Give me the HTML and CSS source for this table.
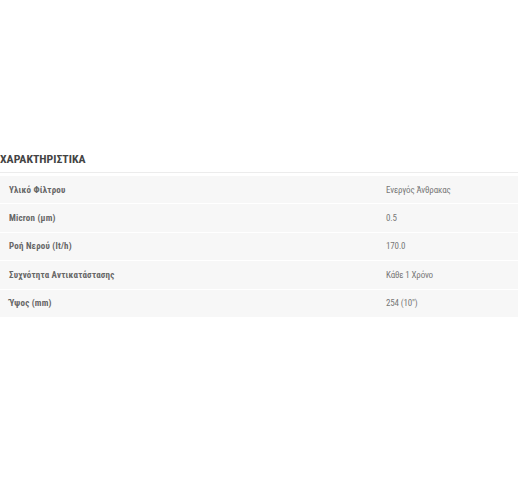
FILE: index.html
```html
<!DOCTYPE html>
<html lang="el">
<head>
<meta charset="utf-8">
<link rel="stylesheet" href="styles.css">
</head>
<body>
<section class="specs">
  <h2 class="specs-title">ΧΑΡΑΚΤΗΡΙΣΤΙΚΑ</h2>
  <table class="specs-table">
    <tr><th>Υλικό Φίλτρου</th><td>Ενεργός Άνθρακας</td></tr>
    <tr><th>Micron (μm)</th><td>0.5</td></tr>
    <tr><th>Ροή Νερού (lt/h)</th><td>170.0</td></tr>
    <tr><th>Συχνότητα Αντικατάστασης</th><td>Κάθε 1 Χρόνο</td></tr>
    <tr><th>Ύψος (mm)</th><td>254 (10")</td></tr>
  </table>
</section>
</body>
</html>
```
FILE: styles.css
```css
html, body { margin: 0; padding: 0; background: #fff; }
body { width: 518px; height: 478px; overflow: hidden; }
.specs { padding-top: 151px; }
.specs-title {
  margin: 0;
  padding: 0 0 5px 0;
  font-family: "Roboto Condensed", "DejaVu Sans Condensed", Roboto, sans-serif;
  font-weight: 700;
  font-size: 11.8px;
  line-height: 16px;
  color: #444;
  border-bottom: 1px solid #ececec;
}
.specs-table {
  width: 518px;
  margin-top: 3px;
  border-collapse: collapse;
  background: #f7f7f7;
  font-family: "Roboto Condensed", "DejaVu Sans Condensed", Roboto, sans-serif;
  font-size: 9px;
}
.specs-table tr { border-bottom: 1px solid #fff; }
.specs-table th, .specs-table td {
  height: 27.4px;
  padding: 0;
  text-align: left;
  vertical-align: middle;
}
.specs-table th {
  width: 377px;
  padding-left: 9px;
  font-weight: 700;
  letter-spacing: 0.2px;
  color: #666;
}
.specs-table td {
  color: #777;
  font-weight: 400;
  letter-spacing: -0.15px;
}
```
